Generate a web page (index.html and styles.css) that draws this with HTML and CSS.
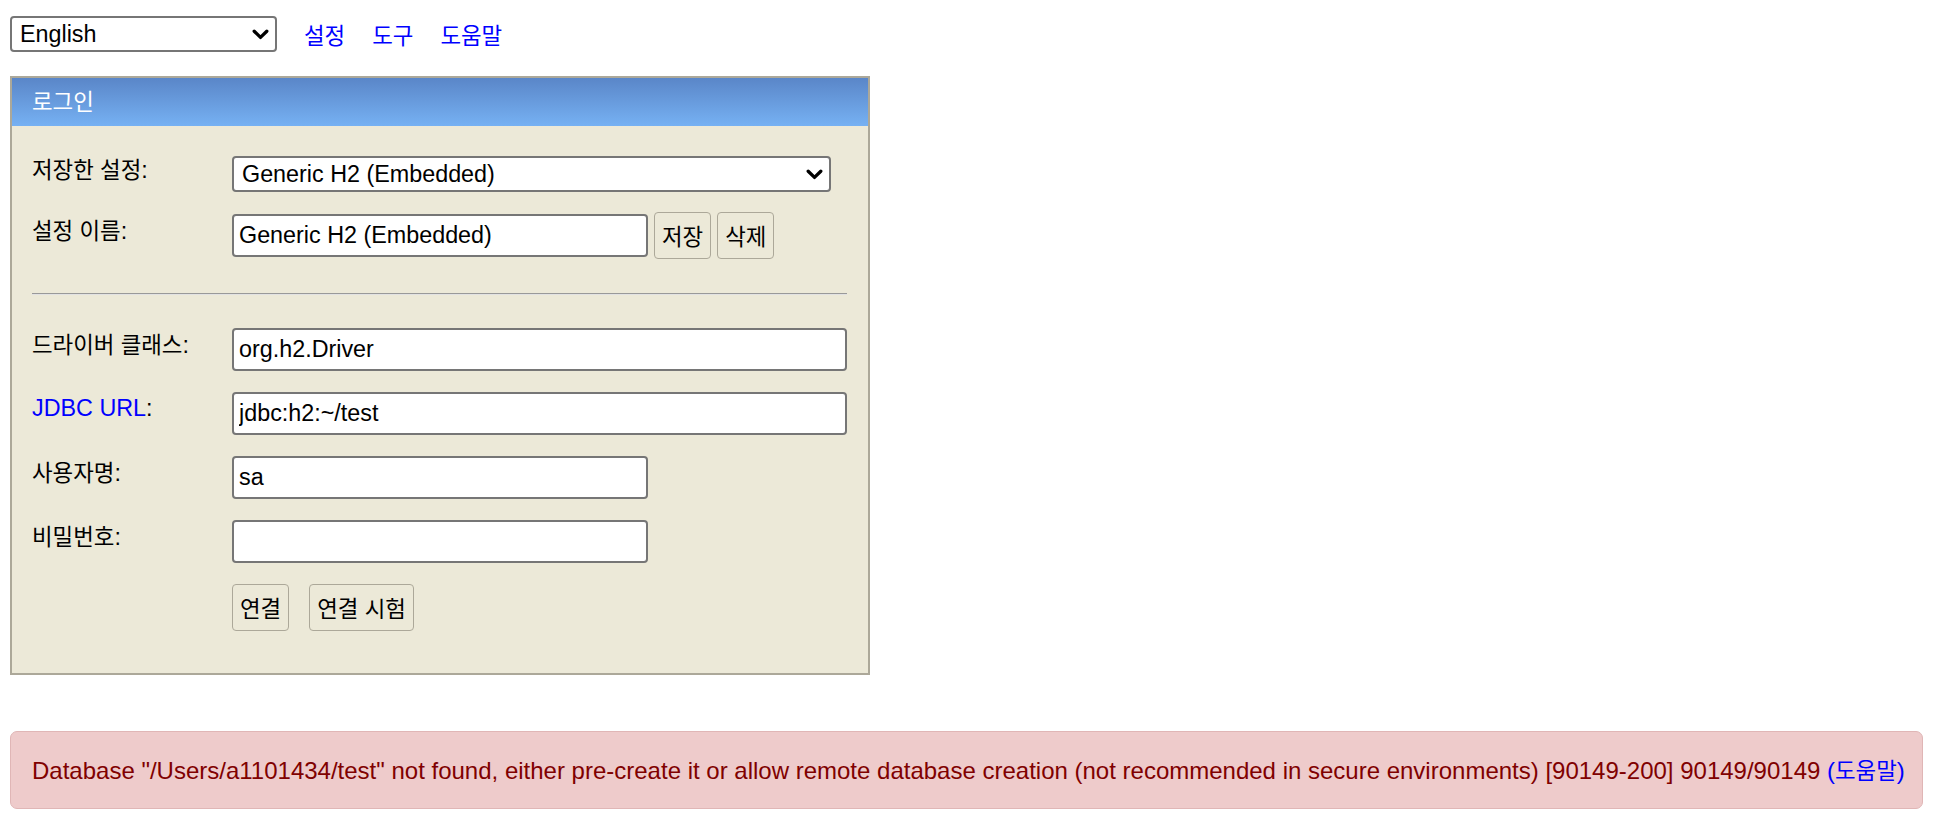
FILE: index.html
```html
<!DOCTYPE html>
<html lang="ko">
<head>
<meta charset="utf-8">
<title>H2 Console</title>
<link rel="stylesheet" href="styles.css">
</head>
<body>
<div class="topbar">
  <div class="select-wrap lang">
    <select><option>English</option></select>
    <svg width="17" height="11" viewBox="0 0 17 11"><path d="M2.2 2.2 L8.5 8.4 L14.8 2.2" fill="none" stroke="#000" stroke-width="3.3" stroke-linecap="round" stroke-linejoin="round"/></svg>
  </div>
  <nav class="nav">
    <a href="#" class="ko">설정</a>
    <a href="#" class="ko">도구</a>
    <a href="#" class="ko">도움말</a>
  </nav>
</div>

<div class="login">
  <div class="login-head"><span class="ko">로그인</span></div>
  <div class="login-body">
    <div class="row row-select">
      <label class="lbl"><span class="ko">저장한 설정</span>:</label>
      <div class="select-wrap setting">
        <select><option>Generic H2 (Embedded)</option></select>
        <svg width="17" height="11" viewBox="0 0 17 11"><path d="M2.2 2.2 L8.5 8.4 L14.8 2.2" fill="none" stroke="#000" stroke-width="3.3" stroke-linecap="round" stroke-linejoin="round"/></svg>
      </div>
    </div>
    <div class="row row-btn">
      <label class="lbl"><span class="ko">설정 이름</span>:</label>
      <input class="field short" type="text" value="Generic H2 (Embedded)">
      <button class="btn ko">저장</button>
      <button class="btn ko">삭제</button>
    </div>
    <hr class="sep">
    <div class="row row-field">
      <label class="lbl"><span class="ko">드라이버 클래스</span>:</label>
      <input class="field wide" type="text" value="org.h2.Driver">
    </div>
    <div class="row row-field">
      <label class="lbl"><a href="#" class="lbl-link">JDBC URL</a>:</label>
      <input class="field wide" type="text" value="jdbc:h2:~/test">
    </div>
    <div class="row row-field">
      <label class="lbl"><span class="ko">사용자명</span>:</label>
      <input class="field short" type="text" value="sa">
    </div>
    <div class="row row-field">
      <label class="lbl"><span class="ko">비밀번호</span>:</label>
      <input class="field short" type="password" value="">
    </div>
    <div class="row row-actions">
      <span class="lbl"></span>
      <button class="btn ko">연결</button>
      <button class="btn ko btn-gap">연결 시험</button>
    </div>
  </div>
</div>

<div class="error">Database "/Users/a1101434/test" not found, either pre-create it or allow remote database creation (not recommended in secure environments) [90149-200] 90149/90149 <a href="#" class="err-link">(<span class="ko">도움말</span>)</a></div>
</body>
</html>
```

FILE: styles.css
```css
* {
  box-sizing: border-box;
}

body {
  margin: 0;
  padding: 16px 15px 0 10px;
  background: #fff;
  color: #000;
  font-family: "Liberation Sans", "Noto Sans CJK KR", sans-serif;
  font-size: 23.33px;
  line-height: 1.2;
}

.ko {
  font-family: "Noto Sans CJK KR", "Liberation Sans", sans-serif;
  font-size: 22.4px;
}

/* top bar */
.topbar {
  display: flex;
  align-items: center;
  height: 36px;
}

.select-wrap {
  position: relative;
}

.select-wrap select {
  -webkit-appearance: none;
  appearance: none;
  display: block;
  width: 100%;
  height: 100%;
  margin: 0;
  padding: 0 30px 0 8px;
  border: 2px solid #767676;
  border-radius: 4px;
  background: #fff;
  color: #000;
  font-family: "Liberation Sans", sans-serif;
  font-size: 23.33px;
}

.select-wrap svg {
  position: absolute;
  right: 8px;
  top: 50%;
  margin-top: -5px;
  pointer-events: none;
}

.lang {
  width: 267px;
  height: 36px;
}

.nav {
  display: flex;
  gap: 27px;
  margin-left: 27px;
}

.nav a {
  color: #00f;
  text-decoration: none;
}

/* login box */
.login {
  width: 860px;
  margin-top: 24px;
  border: 2px solid #aca899;
  background: #ece9d8;
}

.login-head {
  height: 48px;
  display: flex;
  align-items: center;
  padding: 0 0 3px 20px;
  background: linear-gradient(to bottom, #5a86c8, #76b1f3);
  color: #fff;
}

.login-body {
  display: flex;
  flex-direction: column;
  padding: 30px 21px 42px 20px;
}

.row {
  display: flex;
  align-items: center;
}

.row-select {
  height: 36px;
}

.row-btn {
  height: 47px;
  margin-top: 20px;
}

.row-field {
  height: 43px;
  margin-bottom: 21px;
}

.row-actions {
  height: 47px;
}

.lbl {
  width: 200px;
  flex: none;
  padding-bottom: 9px;
}

.lbl-link {
  color: #00f;
  text-decoration: none;
}

.setting {
  width: 599px;
  height: 36px;
}

.field {
  height: 43px;
  margin: 0;
  padding: 0 5px;
  border: 2px solid #767676;
  border-radius: 4px;
  background: #fff;
  color: #000;
  font-family: "Liberation Sans", sans-serif;
  font-size: 23.33px;
}

.wide {
  width: 615px;
}

.short {
  width: 416px;
}

.btn {
  height: 47px;
  margin: 0 0 0 6px;
  padding: 0 7px;
  border: 1.5px solid #aca899;
  border-radius: 4px;
  background: #ece9d8;
  color: #000;
  line-height: 1;
}

.row-actions .btn {
  margin-left: 0;
}

.row-actions .btn-gap {
  margin-left: 20px;
}

.sep {
  margin: 34px 0 33px 0;
  height: 2px;
  border: none;
  border-top: 1px solid #999;
  border-bottom: 1px solid #e2e2e2;
}

/* error */
.error {
  margin-top: 56px;
  padding: 24px 21px;
  border: 1px solid #e0b6b6;
  border-radius: 7px;
  background: #eecbcb;
  color: #800000;
  font-size: 24px;
  line-height: 26px;
  white-space: nowrap;
}

.err-link {
  color: #00f;
  text-decoration: none;
}
```
